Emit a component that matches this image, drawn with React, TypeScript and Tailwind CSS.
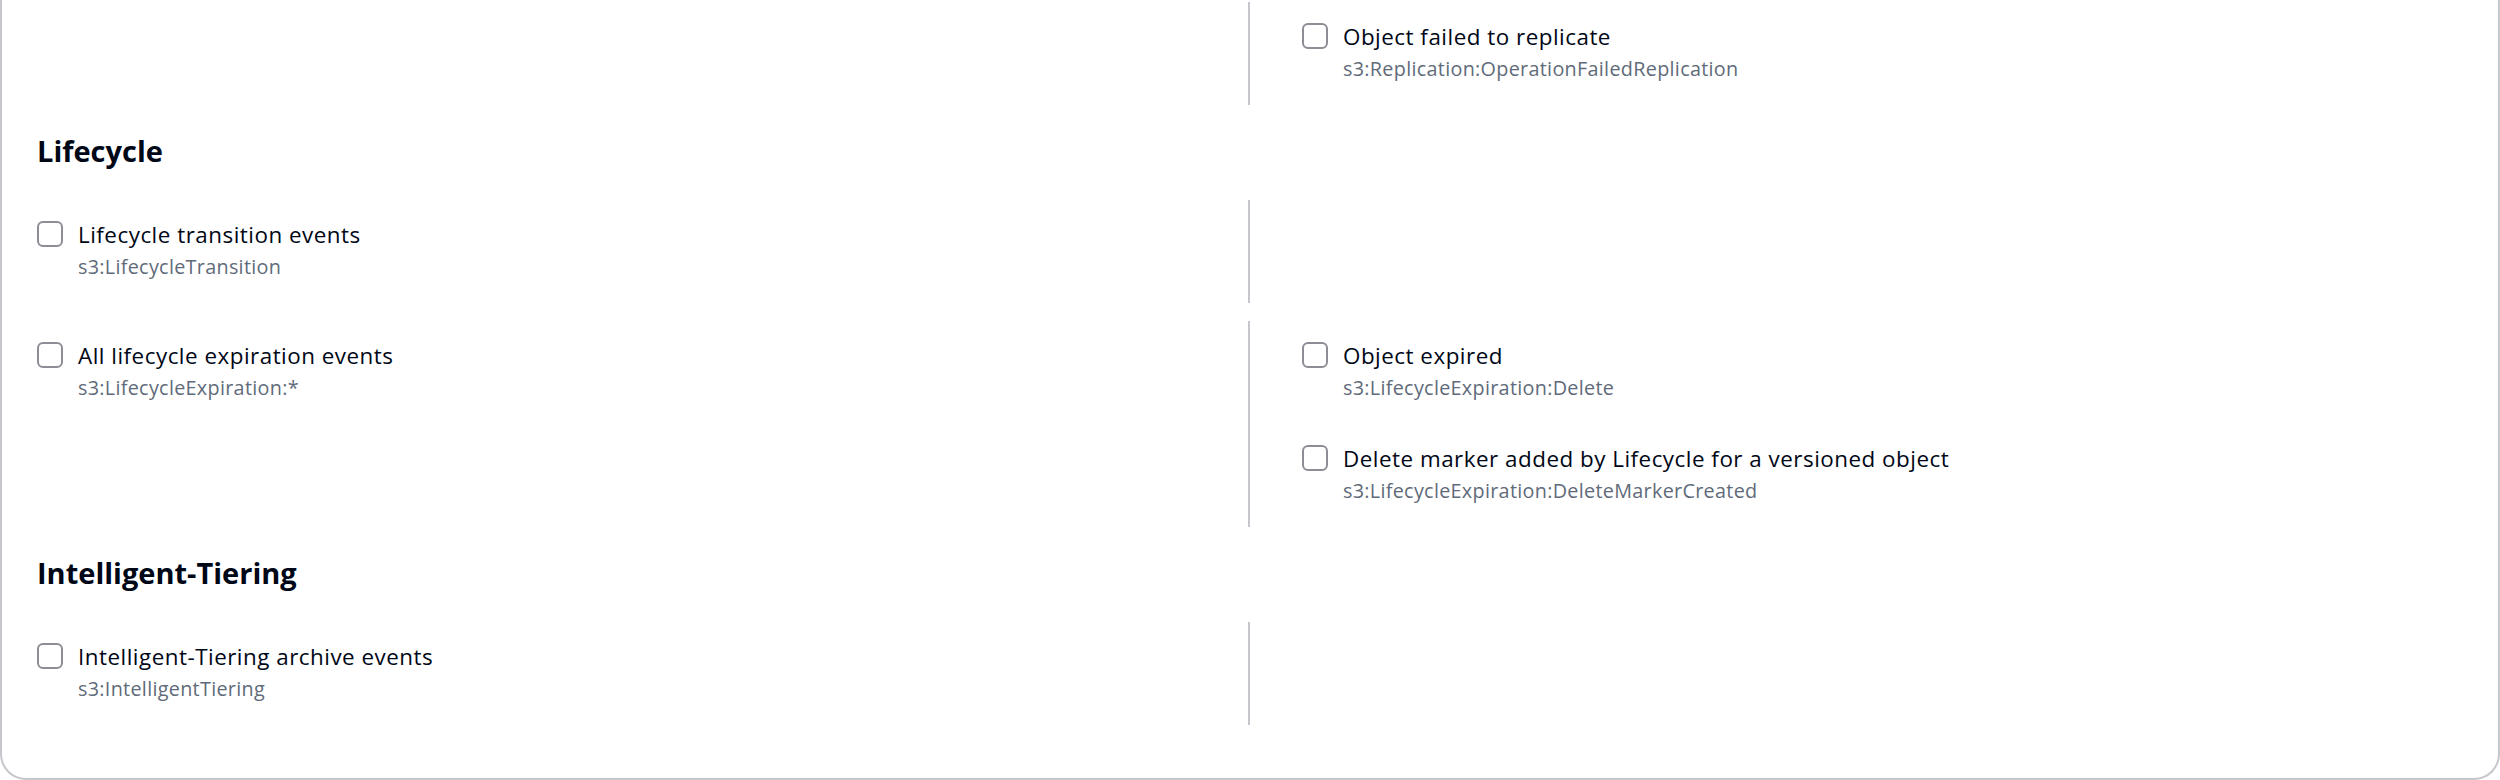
const sections = [
  {
    title: null as string | null,
    rows: [
      {
        left: [] as { label: string; code: string }[],
        right: [
          { label: "Object failed to replicate", code: "s3:Replication:OperationFailedReplication" },
        ],
      },
    ],
  },
  {
    title: "Lifecycle",
    rows: [
      {
        left: [{ label: "Lifecycle transition events", code: "s3:LifecycleTransition" }],
        right: [],
      },
      {
        left: [{ label: "All lifecycle expiration events", code: "s3:LifecycleExpiration:*" }],
        right: [
          { label: "Object expired", code: "s3:LifecycleExpiration:Delete" },
          {
            label: "Delete marker added by Lifecycle for a versioned object",
            code: "s3:LifecycleExpiration:DeleteMarkerCreated",
          },
        ],
      },
    ],
  },
  {
    title: "Intelligent-Tiering",
    rows: [
      {
        left: [{ label: "Intelligent-Tiering archive events", code: "s3:IntelligentTiering" }],
        right: [],
      },
    ],
  },
];

function EventCheckbox({ label, code }: { label: string; code: string }) {
  return (
    <label className="flex h-[103px] items-start gap-[15px] pt-[18px]">
      <input type="checkbox" className="sr-only" />
      <span className="mt-[3px] h-[26px] w-[26px] shrink-0 rounded-[6px] border-2 border-[#8d8d95] bg-white" />
      <span className="mt-[1px] flex flex-col">
        <span className="text-[22.4px] leading-[32px] tracking-[0.5px] text-[#000716]">{label}</span>
        <span className="text-[19.8px] leading-[31px] tracking-[0.3px] text-[#5f6b7a]">{code}</span>
      </span>
    </label>
  );
}

export default function App() {
  return (
    <div
      className="h-[780px] w-[2500px] overflow-hidden bg-white"
      style={{ fontFamily: '"Open Sans", "Noto Sans", sans-serif' }}
    >
      <div className="h-[780px] rounded-b-[26px] border-x-2 border-b-2 border-[#c6c6cd] pl-[35px] pr-[36px] pt-[2px]">
        {sections.map((section, si) => (
          <div key={si}>
            {section.title && (
              <h3 className="mt-[28px] mb-[31px] text-[29px] leading-[36px] font-bold text-[#000716]">
                {section.title}
              </h3>
            )}
            <div className="flex flex-col gap-[18px]">
              {section.rows.map((row, ri) => (
                <div key={ri} className="grid grid-cols-[1211px_1fr]">
                  <div className="flex flex-col">
                    {row.left.map((item) => (
                      <EventCheckbox key={item.code} {...item} />
                    ))}
                  </div>
                  <div className="flex min-h-[103px] flex-col border-l-2 border-[#c6c6cd] pl-[52px]">
                    {row.right.map((item) => (
                      <EventCheckbox key={item.code} {...item} />
                    ))}
                  </div>
                </div>
              ))}
            </div>
          </div>
        ))}
      </div>
    </div>
  );
}
